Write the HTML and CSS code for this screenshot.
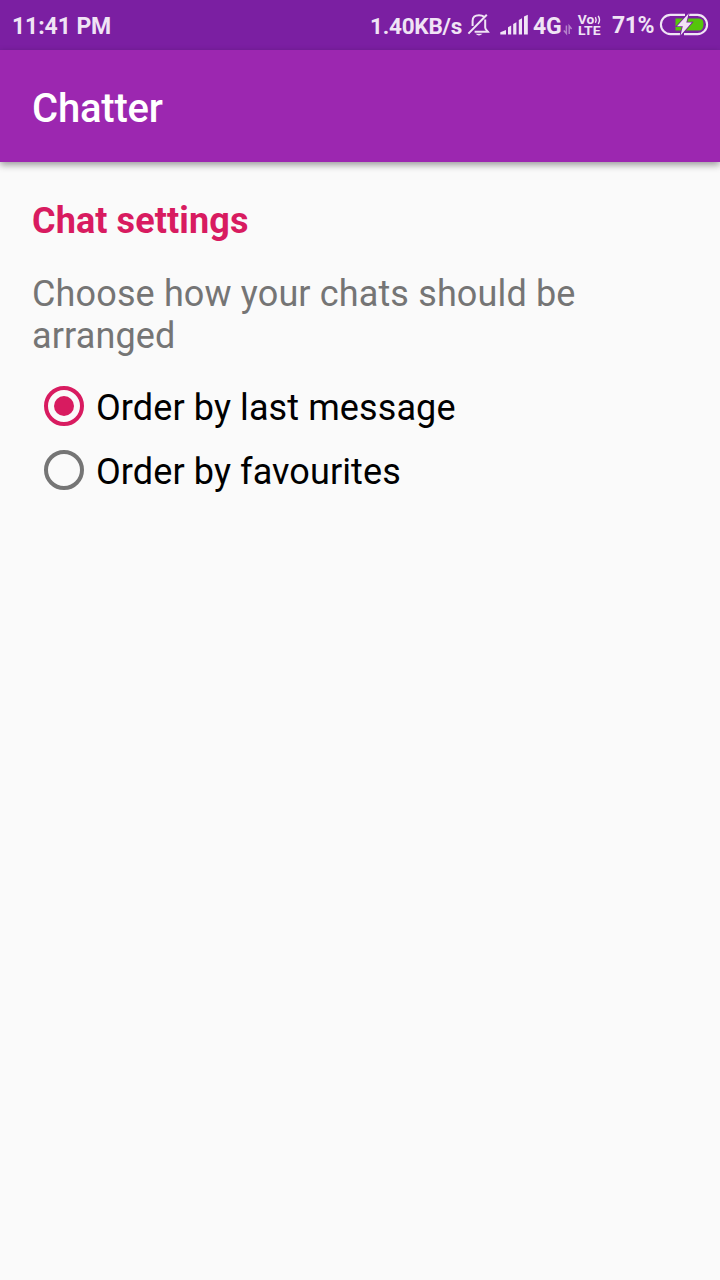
FILE: index.html
```html
<!DOCTYPE html>
<html lang="en">
<head>
<meta charset="utf-8">
<title>Chatter</title>
<link rel="stylesheet" href="styles.css">
</head>
<body>
<div class="status">
  <span class="clock">11:41 PM</span>
  <span class="speed">1.40KB/s</span>
  <svg class="bell" width="24" height="26" viewBox="466 12 24 26" fill="none" stroke="currentColor" stroke-width="2">
    <path d="M472.6 26V21C472.6 17 475 15.2 479 15.2C481 15.2 482.6 15.6 483.7 16.6M485.2 19.5V27.5C485.2 29.5 487 30.2 488 31.8H474.6M468.4 33.6L486.8 14.8"/>
    <path d="M475.5 33.8H482.5Q479 37.4 475.5 33.8Z" fill="currentColor" stroke="none"/>
  </svg>
  <svg class="signal" width="30" height="26" viewBox="499 12 30 26" fill="currentColor">
    <path d="M500.3 34.5V32.3L506 30V34.5ZM508 34.5V27.2L511.2 25.5V34.5ZM513.2 34.5V24L516.4 22.3V34.5ZM518.8 34.5V20L522 18.3V34.5ZM524 34.5V16.6L527.8 14.8V34.5Z"/>
  </svg>
  <span class="network">4G</span>
  <svg class="arrows" width="12" height="26" viewBox="562 12 12 26" fill="none" stroke="currentColor" stroke-width="1.5">
    <path d="M566.4 25.5V33.5L563.8 30.6M569.2 34V26L571.6 29"/>
  </svg>
  <svg class="volte" width="26" height="26" viewBox="576 12 26 26">
    <text x="577.7" y="23.5" font-size="12.5" textLength="16.5" lengthAdjust="spacingAndGlyphs">Vo</text>
    <text x="578" y="35" font-size="12.8" textLength="22.5" lengthAdjust="spacingAndGlyphs">LTE</text>
    <path d="M595.4 17.2Q597 20 595.4 22.8M598.2 15.8Q600.8 20 598.2 24" fill="none" stroke="currentColor" stroke-width="1.4"/>
  </svg>
  <span class="percent">71%</span>
  <svg class="battery" width="50" height="26" viewBox="659 12 50 26">
    <path d="M675.5 18.5H699Q703.8 18.5 703.5 24.5T699 30.5H675.5Z" fill="#55c50b"/>
    <path d="M685 14.9H670.5A9.6 9.6 0 0 0 670.5 34.1H680M689 14.9H697.5A9.6 9.6 0 0 1 697.5 34.1H684" fill="none" stroke="currentColor" stroke-width="2.1"/>
    <path d="M688.8 13.2L677 26.2H682.8L680.5 35.5L691.8 22.6H686.3Z" fill="currentColor" stroke="#7b1fa2" stroke-width="1.6" paint-order="stroke"/>
  </svg>
</div>
<header class="toolbar"><h1>Chatter</h1></header>
<main class="settings">
  <h2>Chat settings</h2>
  <p>Choose how your chats should be arranged</p>
  <div class="options" role="radiogroup">
    <div class="option" role="radio" aria-checked="true"><span class="radio checked"></span><span class="label">Order by last message</span></div>
    <div class="option" role="radio" aria-checked="false"><span class="radio"></span><span class="label">Order by favourites</span></div>
  </div>
</main>
</body>
</html>
```
FILE: styles.css
```css
* { box-sizing: border-box; }
body {
  margin: 0;
  min-height: 1280px;
  background: #fafafa;
  font-family: Roboto, sans-serif;
}
h1, h2, p { margin: 0; }
.status {
  display: flex;
  align-items: center;
  height: 50px;
  padding: 2px 11px 0 12px;
  background: #7b1fa2;
  color: #f0e4f5;
  font-size: 23px;
  font-weight: 700;
  line-height: 26px;
  white-space: nowrap;
}
.status svg { flex: none; margin-top: -2px; }
.clock { width: 358px; letter-spacing: -.1px; }
.speed { width: 96px; font-size: 22.5px; letter-spacing: -.22px; }
.clock, .network { padding-top: 1px; }
.signal { margin-left: 9px; }
.network { width: 29px; margin-left: 4px; letter-spacing: -.3px; }
.arrows { opacity: .5; }
.volte { margin-left: 2px; fill: currentColor; }
.percent { width: 47px; margin-left: 10px; letter-spacing: -.4px; }
.toolbar {
  display: flex;
  align-items: center;
  height: 112px;
  padding: 6px 32px 0;
  background: #9c27b0;
  box-shadow: 0 3px 7px rgba(0, 0, 0, .38);
}
.toolbar h1 {
  color: #fff;
  font-size: 40px;
  font-weight: 500;
  line-height: 48px;
  letter-spacing: -.2px;
}
.settings { padding: 38px 32px; }
.settings h2 {
  color: #d81b60;
  font-size: 36px;
  font-weight: 700;
  line-height: 42px;
  letter-spacing: .1px;
}
.settings p {
  margin-top: 31px;
  color: #757575;
  font-size: 36px;
  line-height: 42px;
  letter-spacing: .14px;
}
.options { margin-top: 17px; }
.option {
  display: flex;
  align-items: center;
  height: 64px;
}
.radio {
  display: flex;
  align-items: center;
  justify-content: center;
  width: 40px;
  height: 40px;
  margin: 0 12px;
  border: 4px solid #757575;
  border-radius: 50%;
}
.radio.checked { border-color: #d81b60; }
.radio.checked::after {
  content: "";
  width: 20px;
  height: 20px;
  border-radius: 50%;
  background: #d81b60;
}
.label {
  margin-top: 4px;
  color: #000;
  font-size: 36px;
  line-height: 42px;
  letter-spacing: .1px;
}
```
